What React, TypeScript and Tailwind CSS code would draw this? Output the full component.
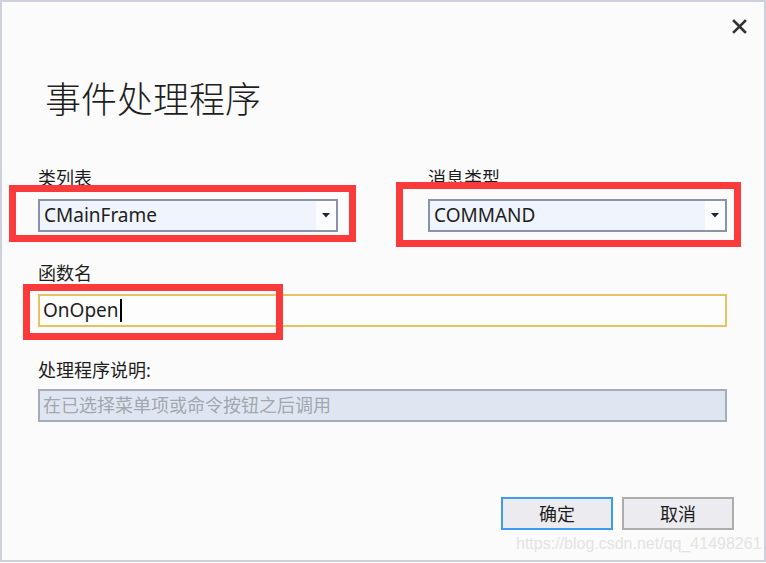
import React from "react";

function Combo({ value }: { value: string }) {
  return (
    <div className="mt-[9px] flex h-[33px] border-2 border-[#8b94a6] bg-[#f0f4fc]">
      <div className="flex flex-1 items-center pl-[4px] text-[19px] leading-[29px] text-[#1e1e1e]">{value}</div>
      <div className="flex w-[20px] items-center justify-center bg-[#fbfcfd]">
        <svg width="8" height="5" viewBox="0 0 8 5">
          <path d="M0 0 L8 0 L4 4.5 Z" fill="#1b2738" />
        </svg>
      </div>
    </div>
  );
}

export default function App() {
  return (
    <div className="relative h-[563px] w-[766px] overflow-hidden bg-white font-['Noto_Sans','Noto_Sans_CJK_SC',sans-serif]">
      <div className="flex h-[562px] flex-col border-2 border-[#cdd0dd] bg-[#fbfbfb] pl-[36px] pr-[37px]">
        <div className="-mr-[20px] flex justify-end pt-[17px]">
          <svg width="15" height="15" viewBox="0 0 15 15">
            <path d="M2 2 L13 13 M13 2 L2 13" stroke="#333" strokeWidth="2.6" strokeLinecap="square" />
          </svg>
        </div>
        <div className="mt-[44px] pl-[7px] text-[36px] font-light leading-[44px] text-[#1e1e1e]">事件处理程序</div>

        <div className="mt-[44px] flex gap-[90px]">
          <div className="w-[300px]">
            <div className="text-[18px] leading-[24px] text-[#1e1e1e]">类列表</div>
            <Combo value="CMainFrame" />
          </div>
          <div className="flex-1">
            <div className="text-[18px] leading-[24px] text-[#1e1e1e]">消息类型</div>
            <Combo value="COMMAND" />
          </div>
        </div>

        <div className="mt-[29px] text-[18px] leading-[24px] text-[#1e1e1e]">函数名</div>
        <div className="mt-[9px] flex h-[33px] items-center border-2 border-[#e5c363] bg-[#fdfdfd] pl-[3px] text-[19px] leading-[29px] text-[#1e1e1e]">
          <span>OnOpen</span>
          <span className="ml-[1px] h-[23px] w-[2px] bg-black" />
        </div>

        <div className="mt-[31px] text-[18px] leading-[24px] text-[#1e1e1e]">处理程序说明:</div>
        <div className="mt-[7px] flex h-[33px] items-center border-2 border-[#a5adbb] bg-[#dfe6f1] pl-[3px] text-[18px] leading-[29px] text-[#a2a6ae]">
          在已选择菜单项或命令按钮之后调用
        </div>

        <div className="-mr-[7px] mt-[75px] flex justify-end gap-[9px]">
          <button className="flex h-[33px] w-[112px] items-center justify-center border-2 border-[#3d9bf0] bg-[#ececf0] text-[18px] leading-[24px] text-[#1e1e1e]">
            确定
          </button>
          <button className="flex h-[33px] w-[112px] items-center justify-center border-2 border-[#adadad] bg-[#ececf0] text-[18px] leading-[24px] text-[#1e1e1e]">
            取消
          </button>
        </div>
      </div>

      <div className="pointer-events-none absolute left-[9px] top-[185px] h-[57px] w-[347px] border-[7px] border-[#fb3a3c]" />
      <div className="pointer-events-none absolute left-[396px] top-[182px] h-[65px] w-[345px] border-[7px] border-[#fb3a3c]" />
      <div className="pointer-events-none absolute left-[23px] top-[284px] h-[56px] w-[260px] border-[7px] border-[#fb3a3c]" />

      <div className="pointer-events-none absolute left-[516px] top-[534px] font-['Liberation_Sans',sans-serif] text-[16px] leading-[20px] text-[#e3e3e3]">
        https://blog.csdn.net/qq_41498261
      </div>
    </div>
  );
}
